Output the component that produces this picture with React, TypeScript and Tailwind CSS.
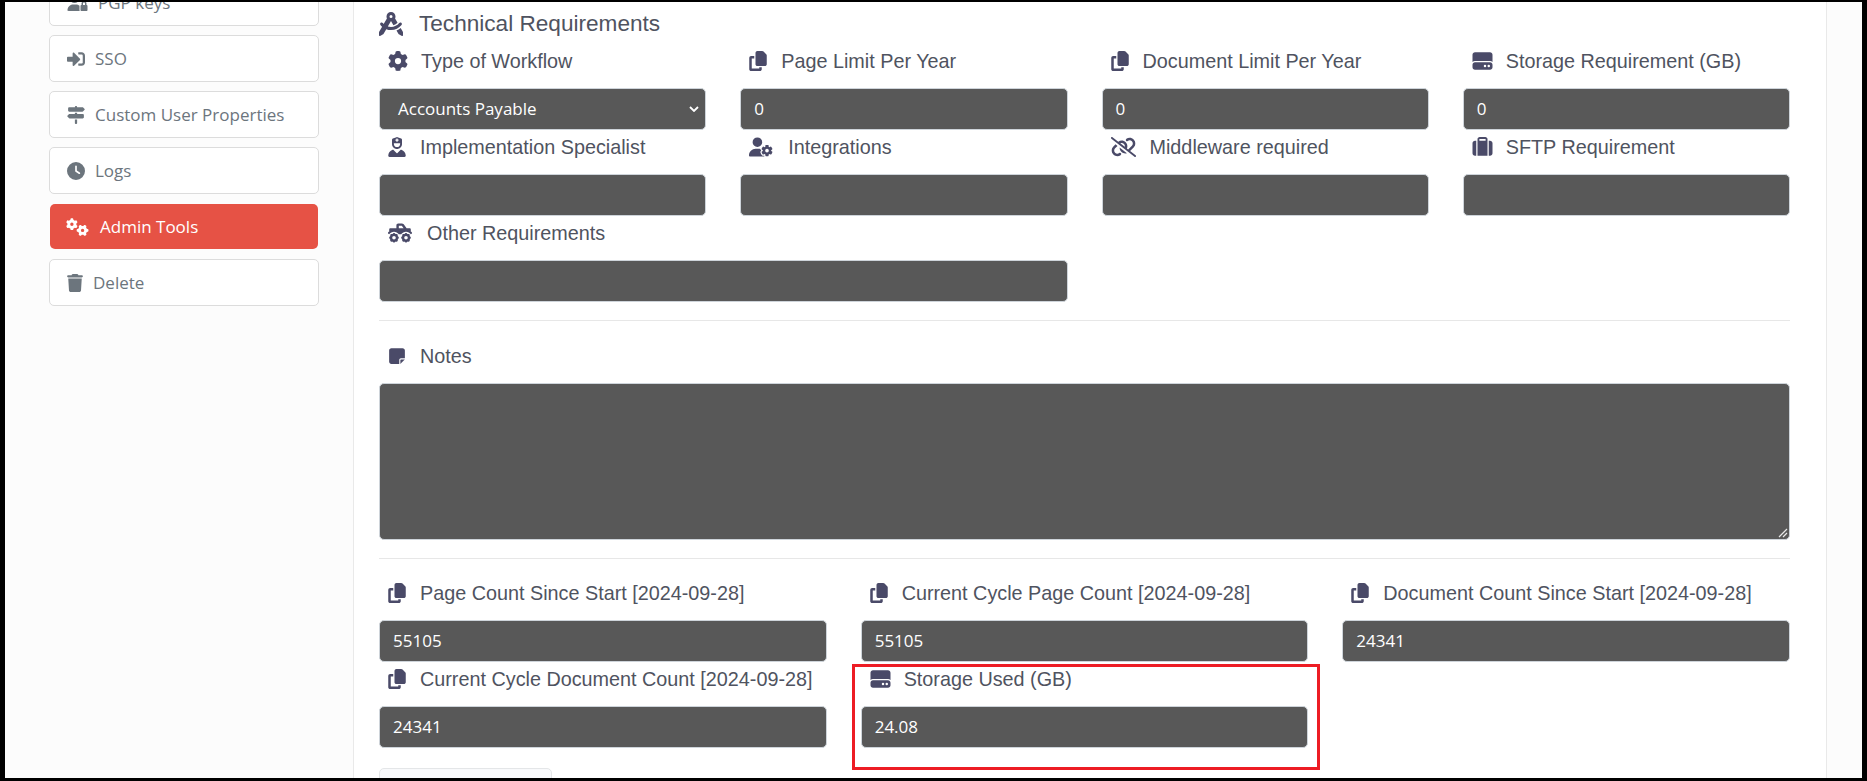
import React from "react";
import {
  FaGear, FaGears, FaClock, FaCopy, FaCompassDrafting, FaHardDrive, FaSignsPost, FaNoteSticky,
  FaSuitcase, FaTrash, FaTruckMonster, FaLinkSlash, FaUserGear, FaUserLock, FaUserNurse, FaFloppyDisk,
} from "react-icons/fa6";
import { FaSignInAlt } from "react-icons/fa";

const sans = "font-['Open_Sans','Liberation_Sans',sans-serif]";

function SideButton({ icon, label, gap = "gap-[10px]" }: { icon: React.ReactNode; label: string; gap?: string }) {
  return (
    <div className={`flex h-[47px] w-[270px] shrink-0 items-center ${gap} rounded-[5px] border border-[#dcdcdc] bg-white pl-[17px] text-[17px] text-[#6c757d] ${sans}`}>
      {icon}
      <span>{label}</span>
    </div>
  );
}

function Label({ icon, label, gap = "gap-[14px]" }: { icon: React.ReactNode; label: string; gap?: string }) {
  return (
    <div className={`flex h-[44px] shrink-0 items-start pl-[9px] pt-[3px] ${gap} text-[19.8px] leading-[28px] text-[#4f5360]`}>
      <span className="flex h-[28px] shrink-0 items-center text-[#4a4a68]">{icon}</span>
      <span className="whitespace-nowrap">{label}</span>
    </div>
  );
}

function Field({ icon, label, value, gap, className = "" }: { icon: React.ReactNode; label: string; value?: string; gap?: string; className?: string }) {
  return (
    <div className={`flex min-w-0 flex-col ${className}`}>
      <Label icon={icon} label={label} gap={gap} />
      <div className={`flex h-[42px] shrink-0 items-center rounded-[5px] border border-[#ced4da] bg-[#585858] px-[13px] text-[17px] text-white ${sans}`}>
        {value}
      </div>
    </div>
  );
}

export default function App() {
  const copy = <FaCopy className="h-[20px] w-[18px]" />;
  const hdd = <FaHardDrive className="h-[20px] w-[21px]" />;
  return (
    <div className="flex h-[781px] w-[1867px] overflow-hidden border-b-[3px] border-l-[5px] border-r-[5px] border-t-[2px] border-black bg-[#fcfcfc] font-['Liberation_Sans',Arial,sans-serif]">
      <aside className="flex w-[349px] shrink-0 flex-col gap-[9px] overflow-hidden border-r border-[#e9e9e9] pl-[44px]">
        <div className="-mt-[23px] shrink-0">
          <SideButton icon={<FaUserLock className="h-[16px] w-[21px]" />} label="PGP keys" />
        </div>
        <SideButton icon={<FaSignInAlt className="h-[18px] w-[18px]" />} label="SSO" />
        <SideButton icon={<FaSignsPost className="h-[18px] w-[18px]" />} label="Custom User Properties" />
        <SideButton icon={<FaClock className="h-[18px] w-[18px]" />} label="Logs" />
        <div className={`my-[1px] ml-[1px] flex h-[45px] w-[268px] shrink-0 items-center gap-[11px] rounded-[5px] bg-[#e65245] pl-[16px] text-[17px] text-white ${sans}`}>
          <FaGears className="h-[18px] w-[23px]" />
          <span>Admin Tools</span>
        </div>
        <SideButton icon={<FaTrash className="h-[18px] w-[16px]" />} label="Delete" />
      </aside>

      <main className="flex min-w-0 flex-1 flex-col overflow-hidden bg-white pl-[25px] pr-[36px]">
        <div className="flex h-[42px] shrink-0 items-center gap-[16px] pt-[2px] text-[22.6px] text-[#4f5360]">
          <FaCompassDrafting className="h-[24px] w-[24px] text-[#4a4a68]" />
          <span>Technical Requirements</span>
        </div>

        <div className="grid shrink-0 grid-cols-4 gap-x-[34px]">
          <div className="flex min-w-0 flex-col">
            <Label icon={<FaGear className="h-[20px] w-[20px]" />} label="Type of Workflow" gap="gap-[13px]" />
            <div className={`flex h-[42px] shrink-0 items-center justify-between rounded-[5px] border border-[#ced4da] bg-[#585858] pl-[18px] pr-[6px] text-[17px] text-white ${sans}`}>
              <span>Accounts Payable</span>
              <svg viewBox="0 0 10 6" className="h-[6px] w-[10px]" fill="none" stroke="white" strokeWidth="1.8"><path d="M1 1l4 4 4-4" /></svg>
            </div>
          </div>
          <Field icon={copy} label="Page Limit Per Year" value="0" gap="gap-[14px]" />
          <Field icon={copy} label="Document Limit Per Year" value="0" gap="gap-[14px]" />
          <Field icon={hdd} label="Storage Requirement (GB)" value="0" gap="gap-[13px]" />
          <Field icon={<FaUserNurse className="h-[20px] w-[18px]" />} label="Implementation Specialist" />
          <Field icon={<FaUserGear className="h-[20px] w-[24px]" />} label="Integrations" gap="gap-[15px]" />
          <Field icon={<FaLinkSlash className="h-[20px] w-[25px]" />} label="Middleware required" gap="gap-[14px]" />
          <Field icon={<FaSuitcase className="h-[20px] w-[21px]" />} label="SFTP Requirement" gap="gap-[13px]" />
          <Field icon={<FaTruckMonster className="h-[20px] w-[24px]" />} label="Other Requirements" gap="gap-[15px]" className="col-span-2" />
        </div>

        <hr className="mb-[17px] mt-[18px] shrink-0 border-t border-[#e7e7e7]" />

        <div className="flex h-[45px] shrink-0 items-start gap-[14px] pl-[9px] pt-[4px] text-[19.8px] leading-[28px] text-[#4f5360]">
          <span className="flex h-[28px] items-center text-[#4a4a68]"><FaNoteSticky className="h-[18px] w-[18px]" /></span>
          <span>Notes</span>
        </div>
        <div className="relative h-[157px] shrink-0 rounded-[5px] border border-[#ced4da] bg-[#585858]">
          <svg viewBox="0 0 10 10" className="absolute bottom-[1px] right-[1px] h-[10px] w-[10px]" stroke="#e8e8e8" strokeWidth="1.2"><path d="M1 9l8-8M5 9l4-4" /></svg>
        </div>

        <hr className="mb-[17px] mt-[18px] shrink-0 border-t border-[#e7e7e7]" />

        <div className="grid shrink-0 grid-cols-3 gap-x-[34px]">
          <Field icon={copy} label="Page Count Since Start [2024-09-28]" value="55105" />
          <Field icon={copy} label="Current Cycle Page Count [2024-09-28]" value="55105" />
          <Field icon={copy} label="Document Count Since Start [2024-09-28]" value="24341" />
          <Field icon={copy} label="Current Cycle Document Count [2024-09-28]" value="24341" />
          <div className="relative">
            <Field icon={hdd} label="Storage Used (GB)" value="24.08" gap="gap-[13px]" />
            <div className="absolute bottom-[-22px] left-[-9px] right-[-12px] top-[2px] border-[3px] border-[#ed1c24]" />
          </div>
        </div>

        <div className="mt-[20px] flex h-[40px] w-[173px] shrink-0 items-center gap-2 rounded-[5px] border border-[#e4e6e8] bg-[#f8f9fb] pl-[12px] text-[#47b868]">
          <FaFloppyDisk className="h-[18px] w-[18px]" />
        </div>
      </main>

      <div className="w-[36px] shrink-0 border-l border-[#e9e9e9] bg-[#fcfcfc]" />
    </div>
  );
}
